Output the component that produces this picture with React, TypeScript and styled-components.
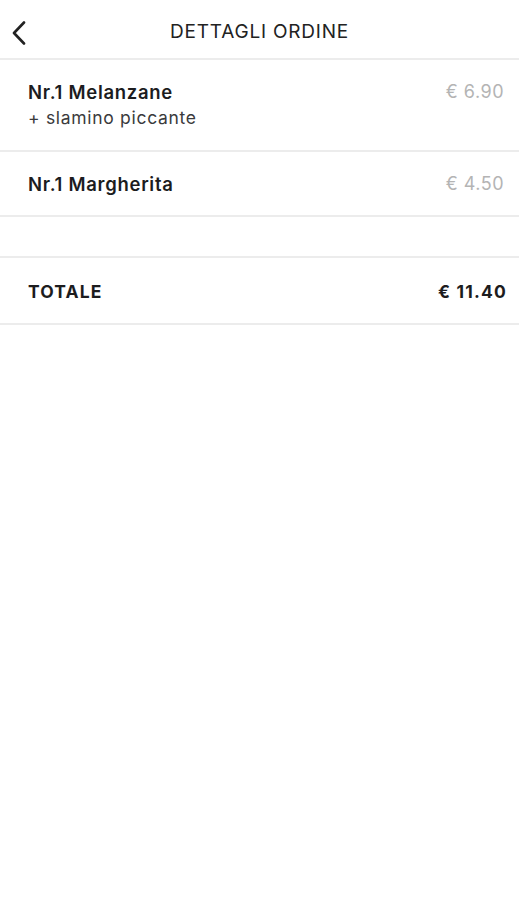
import React from 'react';
import styled, {createGlobalStyle} from 'styled-components';

const GlobalStyle = createGlobalStyle`
body {
    margin: 0;
    background: #ffffff;
    font-family: Inter, "Liberation Sans", sans-serif;
    color: #1c1c1e;
}
`

const Page = styled.div`
display: flex;
flex-direction: column;
width: 519px;
min-height: 900px;
background: #ffffff;
`

const Header = styled.header`
position: relative;
display: flex;
align-items: center;
justify-content: center;
height: 60px;
padding-top: 4px;
box-sizing: border-box;
border-bottom: 2px solid #ececec;
`

const BackButton = styled.button`
position: absolute;
left: 6px;
top: 18px;
display: flex;
align-items: center;
justify-content: center;
width: 26px;
height: 30px;
padding: 0;
border: none;
background: none;
cursor: pointer;
`

const Title = styled.h1`
margin: 0;
font-size: 19px;
font-weight: 400;
letter-spacing: 0.8px;
color: #222;
`

const Row = styled.div<{$height: number}>`
display: flex;
justify-content: space-between;
align-items: flex-start;
height: ${p => p.$height}px;
box-sizing: border-box;
padding: 20px 15px 0 28px;
border-bottom: 2px solid #ececec;
`

const ItemText = styled.div`
display: flex;
flex-direction: column;
gap: 2px;
`

const ItemName = styled.span`
font-size: 18.5px;
font-weight: 600;
line-height: 24px;
letter-spacing: 0.7px;
color: #1c1c1e;
`

const ItemExtra = styled.span`
font-size: 17.5px;
font-weight: 400;
line-height: 24px;
letter-spacing: 0.7px;
color: #3a3a3c;
`

const Price = styled.span`
font-size: 18px;
line-height: 24px;
letter-spacing: 0.5px;
color: #b4b4b4;
`

const Spacer = styled.div`
height: 39px;
border-bottom: 2px solid #ececec;
`

const TotalRow = styled.div`
display: flex;
justify-content: space-between;
align-items: center;
height: 67px;
box-sizing: border-box;
padding: 2px 12px 0 28px;
border-bottom: 2px solid #ececec;
font-size: 17.5px;
font-weight: 700;
color: #1c1c1e;
`

const TotalLabel = styled.span`
letter-spacing: 1.1px;
`

const TotalValue = styled.span`
letter-spacing: 1.2px;
`

const items = [
    {name: 'Nr.1 Melanzane', extra: '+ slamino piccante', price: '€ 6.90'},
    {name: 'Nr.1 Margherita', extra: '', price: '€ 4.50'},
]

const App: React.FC = () => {
    return (
        <>
            <GlobalStyle/>
            <Page>
                <Header>
                    <BackButton aria-label="Indietro">
                        <svg width="16" height="24" viewBox="0 0 16 24">
                            <path d="M13 1.5 L3 12 L13 22.5" fill="none" stroke="#222" strokeWidth="2.6" strokeLinecap="round" strokeLinejoin="round"/>
                        </svg>
                    </BackButton>
                    <Title>DETTAGLI ORDINE</Title>
                </Header>
                {
                    items.map(item => (
                        <Row key={item.name} $height={item.extra ? 92 : 65}>
                            <ItemText>
                                <ItemName>{item.name}</ItemName>
                                {item.extra && <ItemExtra>{item.extra}</ItemExtra>}
                            </ItemText>
                            <Price>{item.price}</Price>
                        </Row>
                    ))
                }
                <Spacer/>
                <TotalRow>
                    <TotalLabel>TOTALE</TotalLabel>
                    <TotalValue>€ 11.40</TotalValue>
                </TotalRow>
            </Page>
        </>
    )
};

export default App;
